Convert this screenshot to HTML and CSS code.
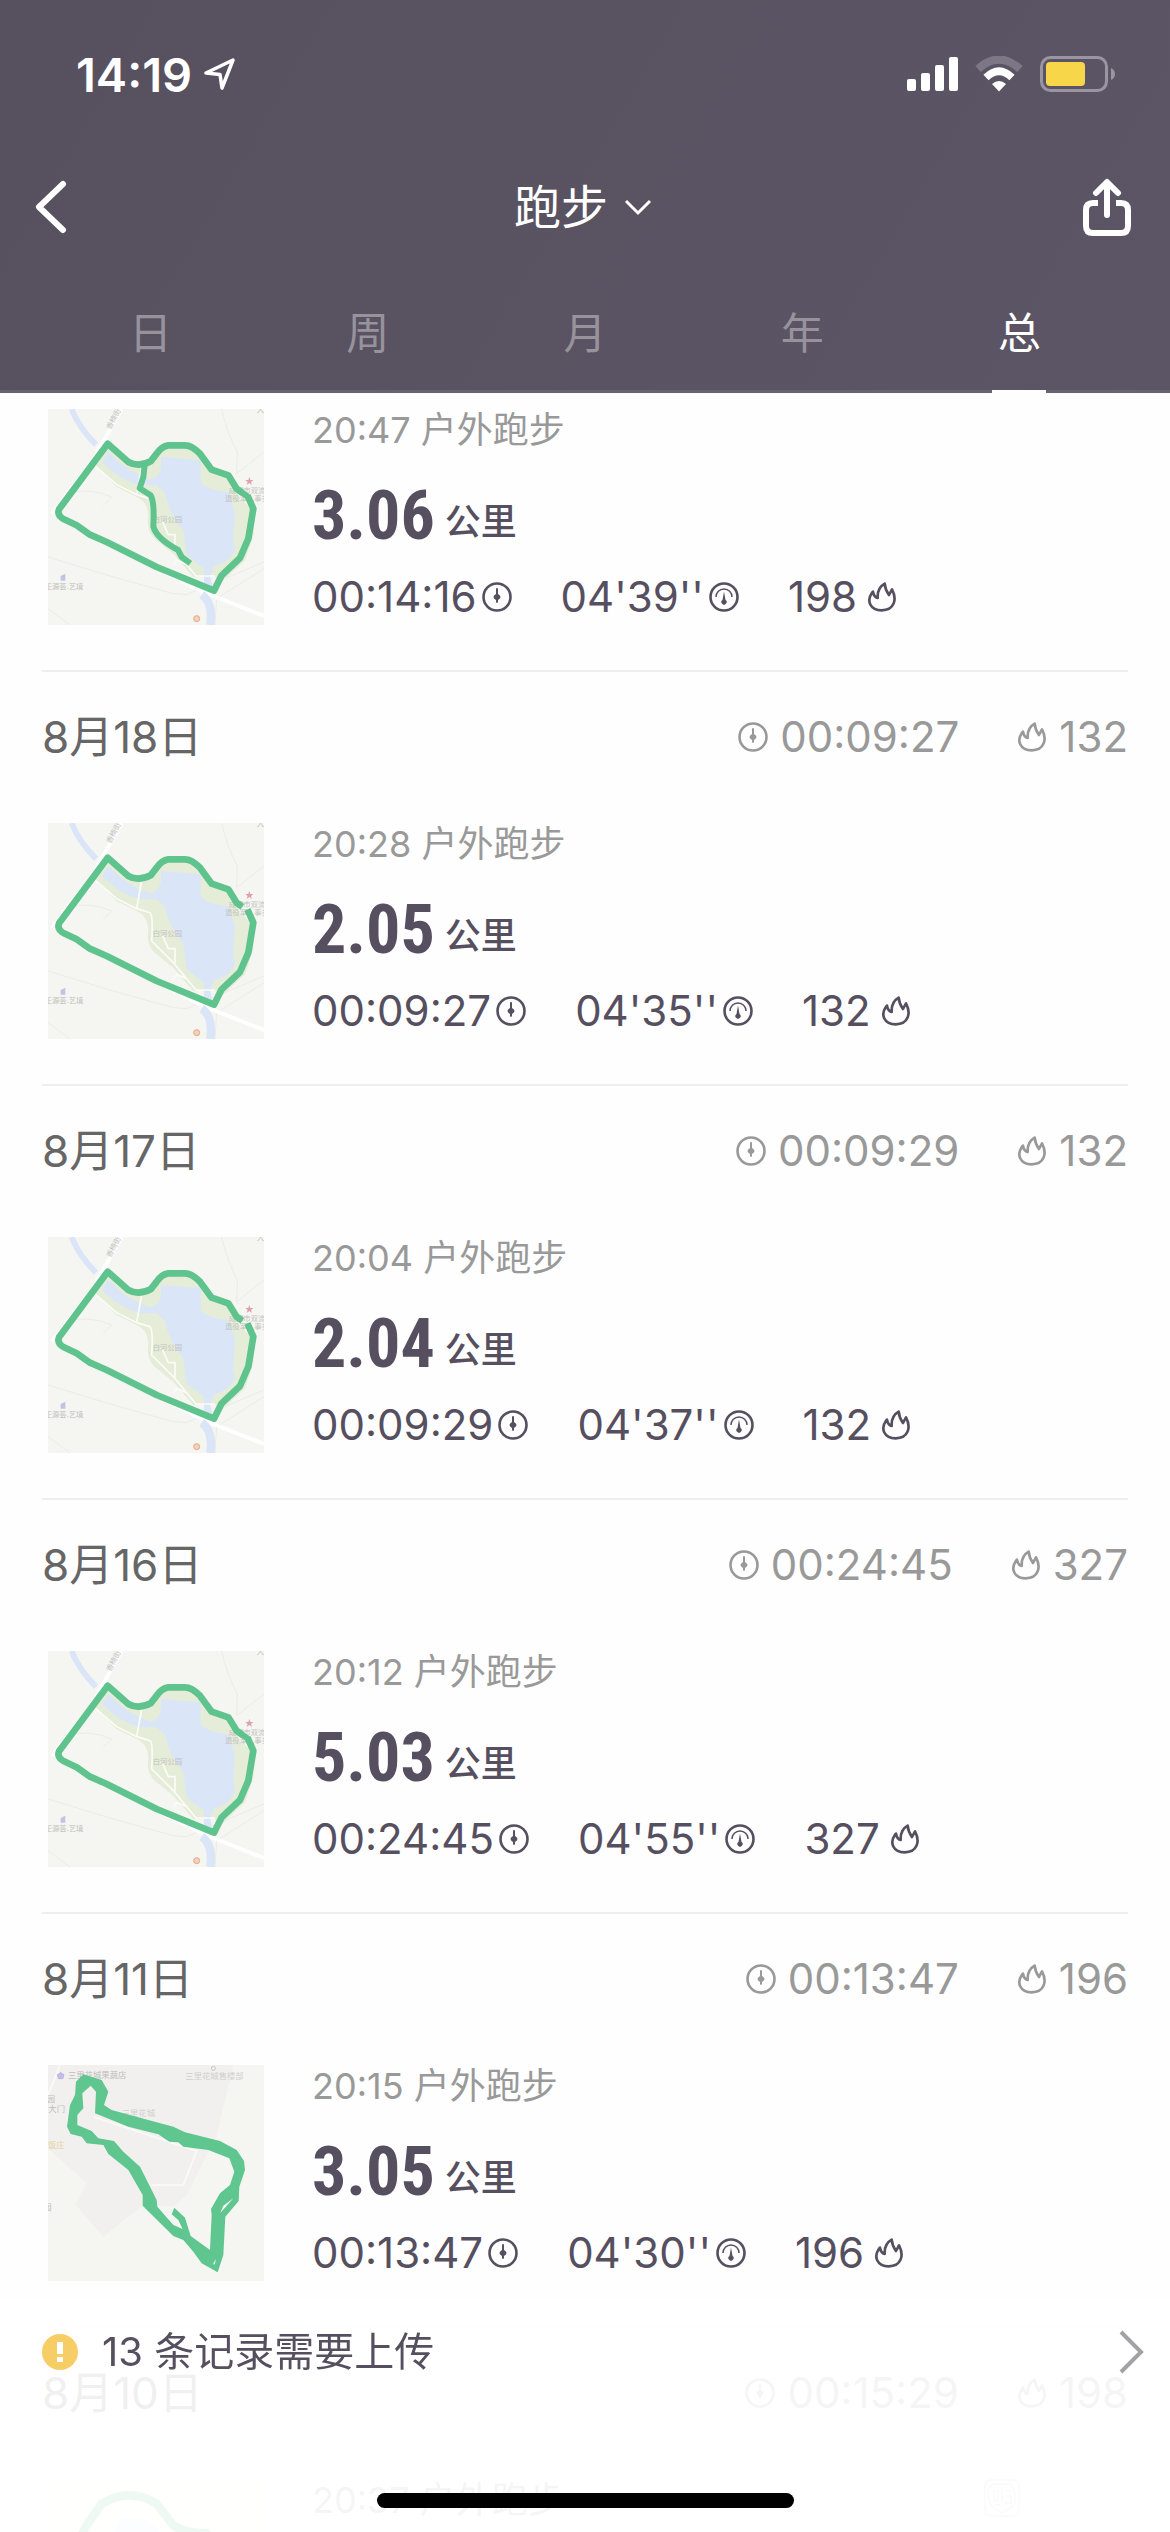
FILE: index.html
```html
<!DOCTYPE html>
<html lang="zh-CN">
<head>
<meta charset="utf-8">
<meta name="viewport" content="width=device-width, initial-scale=1">
<title>跑步</title>
<link rel="stylesheet" href="styles.css">
</head>
<body>
<svg class="defs" aria-hidden="true">
  <symbol id="timer" viewBox="0 0 30 30">
    <circle cx="15" cy="15" r="13.5" fill="none" stroke="currentColor" stroke-width="2.6"/>
    <path d="M14 6.5Q15 5.500 16 6.500V12Q18.500 13.500 18.500 15T16 18V20Q15 22 14 20V18Q11.500 16.500 11.500 15T14 12Z" fill="currentColor"/>
  </symbol>
  <symbol id="pace" viewBox="0 0 30 30">
    <circle cx="15" cy="15" r="13.5" fill="none" stroke="currentColor" stroke-width="2.6"/>
    <path d="M7 15A8 8 0 0 1 23 15" fill="none" stroke="currentColor" stroke-width="1.500"/>
    <path d="M15 9.500L16.500 18A2.600 2.600 0 1 1 13.500 18Z" fill="currentColor"/>
  </symbol>
  <symbol id="flame" viewBox="1204 36 90 90">
    <path d="M1219 68C1202 92 1213 121 1248 121C1286 121 1295 88 1279 58L1270 75C1263 65 1258 55 1257 41C1241 50 1235 66 1236 84C1229 82 1224 76 1222 65Z" fill="none" stroke="currentColor" stroke-width="8" stroke-linejoin="round"/>
  </symbol>
  <symbol id="park" viewBox="24 21 648 648">
    <path d="M24 21H672V669H24Z" fill="#f5f5f1"/>
    <g fill="none" stroke="#ebebe7" stroke-width="3">
      <path d="M24 465L220 525L400 575L440 578L672 480M545 21Q560 90 592 150L590 215L672 150M75 275Q150 255 215 285L190 310M672 500L530 590L525 669M24 620L90 669"/>
    </g>
    <g fill="none" stroke="#fff" stroke-width="12">
      <path d="M245 21L150 190L40 330L200 420L490 570L672 642"/>
    </g>
    <path d="M165 190L205 130L270 185L330 180L370 130H460L510 200L570 230L600 290L645 330L640 400L615 475L545 540L520 520L460 525L400 455L350 415Q318 390 325 345Q325 300 290 285L230 255Z" fill="#e5edd8"/>
    <path d="M362 165L482 175L482 240Q500 265 565 270L585 330L580 420Q595 450 555 480L520 495L510 525L520 560L492 545V500L440 460L430 385Q385 330 375 272L350 250L300 250Q240 235 186 180L205 150Q260 210 330 232Q370 225 362 165Z" fill="#dae5f8"/>
    <path d="M95 21Q115 75 168 128" fill="none" stroke="#dae5f8" stroke-width="17"/>
    <path d="M485 578Q520 600 511 669" fill="none" stroke="#dae5f8" stroke-width="25"/>
    <path d="M168 195L230 248L290 278L330 290Q340 300 335 375L400 440L468 522H525M305 195L290 278M368 360L385 398H405V442M400 490L410 475L440 488" fill="none" stroke="#fbfcf8" stroke-width="5"/>
    <g fill="#c2c2c0" font-size="22">
      <text x="338" y="361">白河公园</text>
      <text x="566" y="274">成都市双流</text>
      <text x="555" y="298">退役军人事务</text>
      <text x="14" y="562">正源荟.艺境</text>
      <text x="650" y="30">大道</text>
      <text transform="translate(212 84) rotate(-62)">香楠街</text>
    </g>
    <path d="M628 225L631 234H640L633 240L636 249L628 243L620 249L623 240L616 234H625Z" fill="#e0a0aa"/>
    <path d="M62 522L76 515V536H62Z" fill="#bfc4e2"/>
    <circle cx="470" cy="650" r="9" fill="#f3d3b4" stroke="#e5a58c" stroke-width="3"/>
  </symbol>
  <symbol id="loop" viewBox="24 21 648 648">
    <path d="M607 272L590 260L565 220L515 203L480 155Q455 130 435 130H385Q365 133 350 155L332 178Q295 197 265 180L203 125L57 322Q50 340 72 352L110 370L150 398L200 420L350 495L522 566L545 520L600 468L625 410L640 320L622 280" fill="none" stroke="#5fc38d" stroke-width="20" stroke-linejoin="round"/>
  </symbol>
</svg>

<div class="app">
  <header class="top">
    <div class="status">
      <div class="clock">14:19
        <svg class="arrow" viewBox="0 0 32 32"><path d="M2 15L29 2L18 30L16 16.500Z" fill="none" stroke="#fff" stroke-width="3.500" stroke-linejoin="round"/></svg>
      </div>
      <div class="signals">
        <svg width="51" height="36" viewBox="0 0 51 36" fill="#fff"><rect y="23" width="9" height="12" rx="2"/><rect x="14" y="17" width="9" height="18" rx="2"/><rect x="28" y="9" width="9" height="26" rx="2"/><rect x="42" y="1" width="9" height="34" rx="2"/></svg>
        <svg width="48" height="36" viewBox="0 0 48 36"><path d="M3 13Q24 -6 45 13" fill="none" stroke="#7d7685" stroke-width="8"/><path d="M11 21.500Q24 9 37 21.500" fill="none" stroke="#fff" stroke-width="7.500"/><path d="M17 28Q24 22 31 28L24 35.500Z" fill="#fff"/></svg>
        <svg width="75" height="36" viewBox="0 0 75 36"><rect x="1.500" y="1.500" width="65" height="33" rx="9" fill="none" stroke="#9a95a2" stroke-width="3"/><rect x="6" y="6" width="39" height="24" rx="4" fill="#f7d649"/><path d="M71 12Q75 14 75 18T71 24Z" fill="#9a95a2"/></svg>
      </div>
    </div>
    <div class="nav">
      <button class="icon-button" aria-label="返回"><svg width="34" height="56" viewBox="0 0 34 56"><path d="M29 5L5 28L29 51" fill="none" stroke="#fff" stroke-width="6" stroke-linecap="round" stroke-linejoin="round"/></svg></button>
      <button class="title">跑步<svg width="28" height="18" viewBox="0 0 28 18"><path d="M2 3L14 15L26 3" fill="none" stroke="#fff" stroke-width="3"/></svg></button>
      <button class="icon-button share" aria-label="分享"><svg width="50" height="58" viewBox="0 0 50 58"><path d="M16 25H11Q4 25 4 32V48Q4 55 11 55H39Q46 55 46 48V32Q46 25 39 25H34" fill="none" stroke="#fff" stroke-width="6"/><path d="M25 37V5M14 15L25 4L36 15" fill="none" stroke="#fff" stroke-width="6" stroke-linecap="round" stroke-linejoin="round"/></svg></button>
    </div>
    <nav class="tabs">
      <button class="tab">日</button>
      <button class="tab">周</button>
      <button class="tab">月</button>
      <button class="tab">年</button>
      <button class="tab active">总</button>
    </nav>
  </header>

  <main class="list">
    <section class="day first">
      <article class="run">
        <svg class="map" viewBox="24 21 648 648"><use href="#park" x="24" y="21" width="648" height="648"/><use href="#loop" x="24" y="21" width="648" height="648"/><path d="M600 268L624 284M314 189L310 225L299 259L332 280Q344 300 340 374Q350 410 414 444L425 465L451 484" fill="none" stroke="#5fc38d" stroke-width="18" stroke-linejoin="round"/></svg>
        <div class="info">
          <p class="when">20:47 户外跑步</p>
          <p class="distance"><strong>3.06</strong><span>公里</span></p>
          <ul class="stats"><li>00:14:16<svg><use href="#timer"/></svg></li><li>04'39''<svg><use href="#pace"/></svg></li><li class="kcal">198<svg><use href="#flame"/></svg></li></ul>
        </div>
      </article>
    </section>

    <section class="day">
      <div class="summary"><h2>8月18日</h2><ul class="totals"><li><svg><use href="#timer"/></svg>00:09:27</li><li><svg><use href="#flame"/></svg>132</li></ul></div>
      <article class="run">
        <svg class="map" viewBox="24 21 648 648"><use href="#park" x="24" y="21" width="648" height="648"/><use href="#loop" x="24" y="21" width="648" height="648"/></svg>
        <div class="info">
          <p class="when">20:28 户外跑步</p>
          <p class="distance"><strong>2.05</strong><span>公里</span></p>
          <ul class="stats"><li>00:09:27<svg><use href="#timer"/></svg></li><li>04'35''<svg><use href="#pace"/></svg></li><li class="kcal">132<svg><use href="#flame"/></svg></li></ul>
        </div>
      </article>
    </section>

    <section class="day">
      <div class="summary"><h2>8月17日</h2><ul class="totals"><li><svg><use href="#timer"/></svg>00:09:29</li><li><svg><use href="#flame"/></svg>132</li></ul></div>
      <article class="run">
        <svg class="map" viewBox="24 21 648 648"><use href="#park" x="24" y="21" width="648" height="648"/><use href="#loop" x="24" y="21" width="648" height="648"/></svg>
        <div class="info">
          <p class="when">20:04 户外跑步</p>
          <p class="distance"><strong>2.04</strong><span>公里</span></p>
          <ul class="stats"><li>00:09:29<svg><use href="#timer"/></svg></li><li>04'37''<svg><use href="#pace"/></svg></li><li class="kcal">132<svg><use href="#flame"/></svg></li></ul>
        </div>
      </article>
    </section>

    <section class="day">
      <div class="summary"><h2>8月16日</h2><ul class="totals"><li><svg><use href="#timer"/></svg>00:24:45</li><li><svg><use href="#flame"/></svg>327</li></ul></div>
      <article class="run">
        <svg class="map" viewBox="24 21 648 648"><use href="#park" x="24" y="21" width="648" height="648"/><use href="#loop" x="24" y="21" width="648" height="648"/><path d="M600 268L624 284" stroke="#5fc38d" stroke-width="18"/></svg>
        <div class="info">
          <p class="when">20:12 户外跑步</p>
          <p class="distance"><strong>5.03</strong><span>公里</span></p>
          <ul class="stats"><li>00:24:45<svg><use href="#timer"/></svg></li><li>04'55''<svg><use href="#pace"/></svg></li><li class="kcal">327<svg><use href="#flame"/></svg></li></ul>
        </div>
      </article>
    </section>

    <section class="day">
      <div class="summary"><h2>8月11日</h2><ul class="totals"><li><svg><use href="#timer"/></svg>00:13:47</li><li><svg><use href="#flame"/></svg>196</li></ul></div>
      <article class="run">
        <svg class="map" viewBox="24 30 648 648">
          <path d="M24 30H672V678H24Z" fill="#f5f5f1"/>
          <path d="M24 30H580L530 240L440 420L400 455L310 450L260 490L190 545L108 450L140 385L24 280Z" fill="#f1f0ee"/>
          <path d="M24 120L60 30M160 185L470 288L430 390H335" fill="none" stroke="#fafaf8" stroke-width="5"/>
          <g fill="#bdbdbd" font-size="25"><text x="84" y="68">三里花城果蔬店</text><text x="436" y="73" fill="#cfcfcf">三里花城售楼部</text><text x="245" y="184" fill="#cfcfcf">三里花城</text><text x="0" y="172">用大门</text><text x="20" y="140">园</text><text x="10" y="464">园</text><text x="24" y="280" fill="#e3d3a0">饭庄</text></g>
          <path d="M52 58H72L69 71H55ZM56 57Q62 48 68 57" fill="#c5bde5" stroke="#b3aadb" stroke-width="2"/>
          <circle cx="520" cy="40" r="6" fill="none" stroke="#c4c4c4" stroke-width="3"/>
          <path fill="#5fc68f" fill-rule="evenodd" d="M130 58L185 75L205 110L192 150L215 165L300 188L400 215L435 232L540 258L590 285L612 318L615 345L598 395L596 438L556 485L550 600L533 652L485 625L460 590L430 555L400 543L308 452V420L265 345L205 297L190 270L140 265L125 245L92 237L81 215L90 150L105 120L108 80ZM152 92L127 115L130 160L112 180V210L155 228L175 250L222 258L250 290L300 335L350 435L352 455L400 510L428 522L415 495L395 478L403 458L435 488L452 543L510 585L515 480L513 462L540 415L570 390L583 350L568 310L505 285L430 275L415 262L388 260L355 238L265 215L165 175L168 110ZM541 474L550 452L580 430ZM519 628L527 612L525 628Z"/>
        </svg>
        <div class="info">
          <p class="when">20:15 户外跑步</p>
          <p class="distance"><strong>3.05</strong><span>公里</span></p>
          <ul class="stats"><li>00:13:47<svg><use href="#timer"/></svg></li><li>04'30''<svg><use href="#pace"/></svg></li><li class="kcal">196<svg><use href="#flame"/></svg></li></ul>
        </div>
      </article>
    </section>

    <section class="day">
      <div class="summary"><h2>8月10日</h2><ul class="totals"><li><svg><use href="#timer"/></svg>00:15:29</li><li><svg><use href="#flame"/></svg>198</li></ul></div>
      <article class="run">
        <svg class="map" viewBox="24 21 648 648"><path d="M24 21H672V669H24Z" fill="#f8f8f6"/><path d="M210 200L240 140H320L380 200V300H210Z" fill="#dae5f8"/><path d="M100 240L140 160L185 95Q270 45 350 95L400 160Q430 182 500 185L540 260" fill="none" stroke="#5fc38d" stroke-width="26"/></svg>
        <div class="info">
          <p class="when">20:37 户外跑步</p>
        </div>
        <svg class="badge" viewBox="0 0 36 38" fill="none" stroke="#d8d8d8" stroke-width="2"><rect x="1" y="1" width="34" height="36" rx="6"/><path d="M10 5H26Q31 8 31 18T26 29L18 34L10 29Q4 25 4 16T10 5ZM10 10V22M14 10V22H10M18 10V22M22 12H28M22 17H27V24H20M10 26H16"/></svg>
      </article>
    </section>
  </main>

  <footer class="upload">
    <a class="notice" href="#upload">
      <svg width="36" height="36" viewBox="0 0 36 36"><circle cx="18" cy="18" r="18" fill="#f7cd66"/><path d="M15 8H21V20H15ZM15 23H21V28H15Z" fill="#fff"/></svg>
      <span>13 条记录需要上传</span>
      <svg class="go" width="26" height="44" viewBox="0 0 26 44"><path d="M2 2L22 22L2 42" fill="none" stroke="#a3a1a6" stroke-width="4"/></svg>
    </a>
    <div class="home"></div>
  </footer>
</div>
</body>
</html>
```
FILE: styles.css
```css
* {
  box-sizing: border-box;
  margin: 0;
  padding: 0;
}

body {
  background: #fefefe;
  color: #564f5f;
  font-family: Inter, "Noto Sans CJK SC", sans-serif;
}

button {
  border: 0;
  background: none;
  color: inherit;
  font: inherit;
}

svg {
  display: block;
  flex: none;
}

ul {
  list-style: none;
}

.defs {
  position: absolute;
  width: 0;
  height: 0;
}

.app {
  display: flex;
  flex-direction: column;
  height: 100vh;
  overflow: hidden;
}

/* Header */
.top {
  flex: none;
  background: linear-gradient(120deg, #57505f, #5c5565);
  color: #fff;
}

.status {
  display: flex;
  align-items: center;
  justify-content: space-between;
  height: 148px;
  padding: 0 55px 0 76px;
}

.clock {
  display: flex;
  align-items: center;
  gap: 12px;
  font-size: 47px;
  font-weight: 600;
}

.arrow {
  width: 32px;
  height: 32px;
}

.signals {
  display: flex;
  gap: 17px;
}

.nav {
  display: grid;
  grid-template-columns: 1fr auto 1fr;
  align-items: center;
  height: 118px;
  padding: 0 38px 0 34px;
}

.icon-button {
  display: flex;
  justify-self: start;
}

.share {
  justify-self: end;
}

.title {
  display: flex;
  align-items: center;
  gap: 16px;
  font-size: 47px;
  line-height: 64px;
}

.tabs {
  display: flex;
  padding: 10px 42px 0;
  border-bottom: 3px solid #69636f;
}

.tab {
  position: relative;
  flex: 1;
  color: #97929c;
  font-size: 43px;
  line-height: 114px;
}

.active {
  color: #fff;
}

.active::after {
  content: "";
  position: absolute;
  bottom: -3px;
  left: calc(50% - 27px);
  width: 54px;
  height: 3px;
  background: #fff;
}

/* Run list */
.list {
  flex: 1;
  min-height: 0;
  overflow: hidden;
  padding: 0 42px;
}

.day {
  padding-bottom: 45px;
  border-top: 2px solid #eee;
}

.first {
  padding-top: 16px;
  border-top: 0;
}

.summary {
  display: flex;
  align-items: center;
  justify-content: space-between;
  height: 130px;
  margin-bottom: 21px;
}

.summary h2 {
  color: #666;
  font-size: 44px;
  font-weight: 400;
  line-height: 48px;
}

.totals {
  display: flex;
  gap: 58px;
  color: #999;
  font-size: 42px;
  line-height: 48px;
}

.totals li {
  display: flex;
  align-items: center;
  gap: 12px;
}

.totals svg,
.stats svg {
  width: 30px;
  height: 30px;
}

.run {
  display: flex;
  padding-left: 6px;
}

.map {
  width: 216px;
  height: 216px;
  margin-right: 48px;
}

.info {
  display: flex;
  flex-direction: column;
}

.when {
  color: #999;
  font-size: 36px;
  line-height: 42px;
}

.distance {
  display: flex;
  align-items: center;
  gap: 10px;
  height: 80px;
  margin: 25px 0 17px;
}

.distance strong {
  font-family: "Roboto Condensed", Roboto, sans-serif;
  font-size: 68px;
  font-weight: 700;
  line-height: 80px;
}

.distance span {
  padding-top: 12px;
  font-size: 36px;
  font-weight: 500;
  line-height: 40px;
}

.stats {
  display: flex;
  gap: 49px;
  font-size: 42px;
  line-height: 48px;
}

.stats li {
  display: flex;
  align-items: center;
  gap: 5px;
}

.stats .kcal {
  gap: 10px;
}

.badge {
  width: 36px;
  height: 38px;
  margin-right: 108px;
  margin-left: auto;
}

/* Upload notice, laid over the end of the list */
.upload {
  position: fixed;
  right: 0;
  bottom: 0;
  left: 0;
  display: flex;
  flex-direction: column;
  align-items: center;
  justify-content: space-between;
  height: 230px;
  padding: 20px 0 24px;
  background: rgba(255, 255, 255, 0.9);
}

.notice {
  display: flex;
  align-items: center;
  align-self: stretch;
  gap: 24px;
  padding: 0 25px 0 42px;
  color: #564f5f;
  font-size: 40px;
  line-height: 60px;
  text-decoration: none;
}

.go {
  margin-left: auto;
}

.home {
  width: 417px;
  height: 15px;
  border-radius: 8px;
  background: #000;
}
```
